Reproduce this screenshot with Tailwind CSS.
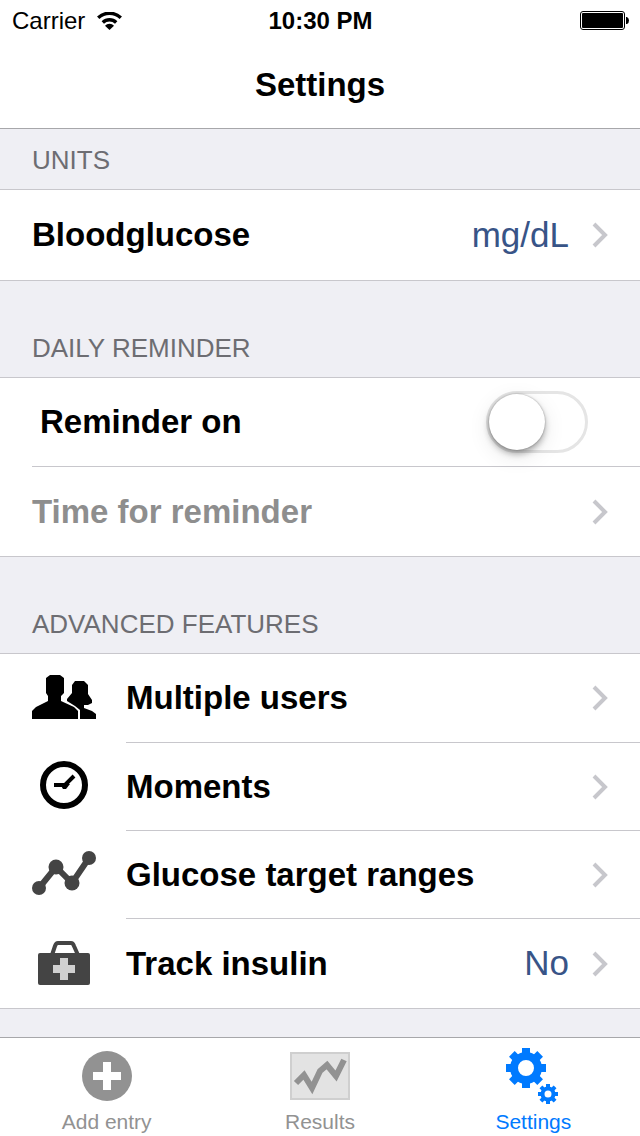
<!DOCTYPE html>
<html lang="en">
<head>
<meta charset="utf-8">
<meta name="viewport" content="width=device-width, initial-scale=1">
<title>Settings</title>
<script src="https://cdn.jsdelivr.net/npm/@tailwindcss/browser@4"></script>
</head>
<body class="flex min-h-screen flex-col bg-[#efeff4] font-['Liberation_Sans',Arial,sans-serif] text-black">

<svg class="hidden" aria-hidden="true">
  <symbol id="chevron" viewBox="0 0 16 26"><path d="M2 2 13 13 2 24" fill="none" stroke="#c7c7cc" stroke-width="4"/></symbol>
</svg>

<header class="border-b border-[#a7a7aa] bg-white">
  <div class="grid h-[41px] grid-cols-3 items-center pr-[11px] pl-3 text-[24px]">
    <div class="flex items-center gap-3">
      <span>Carrier</span>
      <svg class="h-[18px] w-[25px]" viewBox="0 0 25 18" role="img" aria-label="Wi-Fi">
        <path d="M1.2 5.7a16.500 16.500 0 0 1 22.600 0M5.800 10.500a9.600 9.600 0 0 1 13.400 0" fill="none" stroke="#000" stroke-width="3.400"/>
        <path d="M12.500 18 8 13.800a6 6 0 0 1 9 0z"/>
      </svg>
    </div>
    <span class="text-center font-bold">10:30 PM</span>
    <svg class="h-5 w-[49px] justify-self-end" viewBox="0 0 49 20" role="img" aria-label="Battery full">
      <rect x="0.500" y="0.500" width="44" height="18" rx="2.500" fill="none" stroke="#000"/>
      <rect x="2" y="2" width="41" height="15" rx="1"/>
      <path d="M46 6h1q2 1 2 3.500t-2 3.500h-1z"/>
    </svg>
  </div>
  <h1 class="flex h-[87px] items-center justify-center text-[33px] font-bold">Settings</h1>
</header>

<main class="flex-1">
  <section>
    <h2 class="px-8 pt-4 pb-[14px] text-[26px] leading-[30px] text-[#6d6d72]">UNITS</h2>
    <div class="border-y border-[#c8c7cc] bg-white">
      <button class="flex h-[90px] w-full items-center px-8 text-left text-[33px] font-bold">
        <span class="flex-1">Bloodglucose</span>
        <span class="mr-[23px] text-[35px] font-normal text-[#385487]">mg/dL</span>
        <svg class="h-[26px] w-4"><use href="#chevron"/></svg>
      </button>
    </div>
  </section>

  <section>
    <h2 class="px-8 pt-[52px] pb-[14px] text-[26px] leading-[30px] text-[#6d6d72]">DAILY REMINDER</h2>
    <div class="border-y border-[#c8c7cc] bg-white">
      <div class="ml-8 flex h-[89px] items-center border-b border-[#c8c7cc] pr-[52px] pl-2 text-[33px] font-bold">
        <label class="flex-1" for="reminder">Reminder on</label>
        <input id="reminder" type="checkbox" role="switch" class="h-[62px] w-[102px] appearance-none rounded-full border-3 border-[#e5e5e5] bg-white before:block before:size-14 before:rounded-full before:bg-white before:shadow-[0_4px_6px_rgba(0,0,0,0.3),0_0_2px_rgba(0,0,0,0.35),0_6px_22px_rgba(0,0,0,0.1)] checked:bg-[#4cd964] checked:before:ml-10">
      </div>
      <button class="flex h-[89px] w-full items-center px-8 text-left text-[33px] font-bold text-[#8e8e8e]">
        <span class="flex-1">Time for reminder</span>
        <svg class="h-[26px] w-4"><use href="#chevron"/></svg>
      </button>
    </div>
  </section>

  <section>
    <h2 class="px-8 pt-[52px] pb-[14px] text-[26px] leading-[30px] text-[#6d6d72]">ADVANCED FEATURES</h2>
    <div class="border-y border-[#c8c7cc] bg-white text-[33px] font-bold">
      <button class="flex h-[89px] w-full items-center gap-[30px] pl-8 text-left">
        <svg class="mb-1 h-11 w-16 shrink-0" viewBox="0 0 64 44">
          <path d="M18 0h10l4 3v15l-3 3v5l13 6 4 4v8H0v-8l4-4 12-6v-5l-2-3V3z"/>
          <path d="M43 6h9l4 4v9l4 6v3l-4 2h-4v3l8 3 4 3v5H48v-9l-5-4-8-5v-2l5-6v-8z"/>
        </svg>
        <span class="flex h-full flex-1 items-center border-b border-[#c8c7cc] pr-8">
          <span class="flex-1">Multiple users</span>
          <svg class="h-[26px] w-4"><use href="#chevron"/></svg>
        </span>
      </button>
      <button class="flex h-[88px] w-full items-center gap-[30px] pl-8 text-left">
        <svg class="mb-1 h-12 w-16 shrink-0" viewBox="0 0 64 48">
          <circle cx="32" cy="24" r="21" fill="none" stroke="#000" stroke-width="6"/>
          <path d="M22 24h11L42 15" fill="none" stroke="#000" stroke-width="4"/>
          <path d="M28 23h10l-4 5h-3z"/>
        </svg>
        <span class="flex h-full flex-1 items-center border-b border-[#c8c7cc] pr-8">
          <span class="flex-1">Moments</span>
          <svg class="h-[26px] w-4"><use href="#chevron"/></svg>
        </span>
      </button>
      <button class="flex h-[88px] w-full items-center gap-[30px] pl-8 text-left">
        <svg class="mb-1 h-11 w-16 shrink-0" viewBox="0 0 64 44" fill="#444">
          <path d="M7 37 24 16 40 32 57 7" fill="none" stroke="#444" stroke-width="6"/>
          <circle cx="7" cy="37" r="7"/><circle cx="24" cy="16" r="7.500"/><circle cx="40" cy="32" r="7.500"/><circle cx="57" cy="7" r="7"/>
        </svg>
        <span class="flex h-full flex-1 items-center border-b border-[#c8c7cc] pr-8">
          <span class="flex-1">Glucose target ranges</span>
          <svg class="h-[26px] w-4"><use href="#chevron"/></svg>
        </span>
      </button>
      <button class="flex h-[89px] w-full items-center gap-[30px] pl-8 text-left">
        <svg class="mb-0.5 h-11 w-16 shrink-0" viewBox="0 0 64 44">
          <path d="M20 14 23 5q1-3 3-3h13q2 0 3 3l4 9" fill="none" stroke="#444" stroke-width="4"/>
          <rect x="6" y="12" width="52" height="32" rx="2" fill="#444"/>
          <path d="M28 17h8v7h7v8h-7v7h-8v-7h-7v-8h7z" fill="#d0d0d0"/>
        </svg>
        <span class="flex h-full flex-1 items-center pr-8">
          <span class="flex-1">Track insulin</span>
          <span class="mr-[23px] text-[35px] font-normal text-[#385487]">No</span>
          <svg class="h-[26px] w-4"><use href="#chevron"/></svg>
        </span>
      </button>
    </div>
  </section>
</main>

<nav class="sticky bottom-0 grid h-[99px] grid-cols-3 border-t border-[#a7a7aa] bg-white text-[21px] leading-6 text-[#929292]">
  <a href="#add" class="flex flex-col items-center gap-1.5 pt-2">
    <svg class="h-[58px] w-[60px]" viewBox="0 0 60 58">
      <circle cx="30" cy="30" r="25" fill="#929292"/>
      <path d="M26 16h8v10h10v8H34v10h-8V34H16v-8h10z" fill="#fff"/>
    </svg>
    <span>Add entry</span>
  </a>
  <a href="#results" class="flex flex-col items-center gap-1.5 pt-2">
    <svg class="h-[58px] w-[60px]" viewBox="0 0 60 58">
      <rect x="1" y="7" width="58" height="46" fill="#e3e3e3" stroke="#cfcfcf" stroke-width="2"/>
      <path d="m6 37 8-8 8 13 8-17 7-6 9 11 8-16" fill="none" stroke="#929292" stroke-width="6"/>
    </svg>
    <span>Results</span>
  </a>
  <a href="#settings" aria-current="page" class="flex flex-col items-center gap-1.5 pt-2 text-[#007aff]">
    <svg class="h-[58px] w-[60px]" viewBox="0 0 60 58" fill="#007aff">
      <g transform="translate(23 22)">
        <circle r="12" fill="none" stroke="#007aff" stroke-width="8"/>
        <path id="teeth" d="M-4-20h8v7h-8zM-4 13h8v7h-8zM-20-4h7v8h-7zM13-4h7v8h-7z"/>
        <use href="#teeth" transform="rotate(45)"/>
      </g>
      <g transform="translate(45 48)">
        <circle r="5.500" fill="none" stroke="#007aff" stroke-width="4"/>
        <path id="small-teeth" d="M-2-10h4v4h-4zM-2 6h4v4h-4zM-10-2h4v4h-4zM6-2h4v4h-4z"/>
        <use href="#small-teeth" transform="rotate(45)"/>
      </g>
    </svg>
    <span>Settings</span>
  </a>
</nav>
</body>
</html>
